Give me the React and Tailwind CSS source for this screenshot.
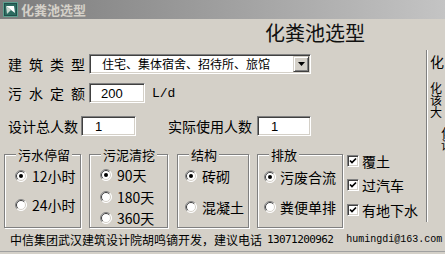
const sunken =
  "border border-t-[#808080] border-l-[#808080] border-b-white border-r-white shadow-[inset_1px_1px_0_#404040,inset_-1px_-1px_0_#d4d0c8] bg-white";
const raised =
  "border border-t-[#d4d0c8] border-l-[#d4d0c8] border-b-[#404040] border-r-[#404040] shadow-[inset_1px_1px_0_#fff,inset_-1px_-1px_0_#808080] bg-[#d4d0c8]";

function AppIcon() {
  return (
    <svg width="15" height="15" viewBox="0 0 15 15" className="shrink-0">
      <rect x="0.5" y="0.5" width="14" height="14" fill="#1f4f4a" stroke="#5f9f8f" />
      <rect x="2" y="2" width="11" height="11" fill="#2d6b60" />
      <path d="M3 4 L11 4 L12 11 L8 8 Z" fill="#ffffff" />
      <path d="M3 4 L8 8 L4 12 Z" fill="#c8d8d0" />
    </svg>
  );
}

function Radio({ checked }) {
  return (
    <svg width="12" height="12" viewBox="0 0 12 12" className="shrink-0">
      <circle cx="6" cy="6" r="5.5" fill="#ffffff" />
      <path d="M2.11 9.89 A5.5 5.5 0 0 1 9.89 2.11" fill="none" stroke="#808080" />
      <path d="M9.89 2.11 A5.5 5.5 0 0 1 2.11 9.89" fill="none" stroke="#ffffff" />
      <path d="M2.8 9.2 A4.5 4.5 0 0 1 9.2 2.8" fill="none" stroke="#404040" />
      <path d="M9.2 2.8 A4.5 4.5 0 0 1 2.8 9.2" fill="none" stroke="#d4d0c8" />
      {checked && <circle cx="6" cy="6" r="2" fill="#000000" />}
    </svg>
  );
}

function RadioRow({ checked, label, pl, gap, mt }) {
  return (
    <div className={`flex items-center h-[16px] ${pl} ${gap} ${mt}`}>
      <Radio checked={checked} />
      <span className="text-[14px] leading-[16px] whitespace-nowrap">{label}</span>
    </div>
  );
}

function Check({ label, mt }) {
  return (
    <div className={`flex items-center h-[16px] gap-[3px] ${mt}`}>
      <div className={`w-[12px] h-[12px] ${sunken} flex items-center justify-center`}>
        <svg width="8" height="8" viewBox="0 0 8 8">
          <path d="M1 3.5 L3 5.5 L7 1.5" fill="none" stroke="#000" strokeWidth="1.7" />
        </svg>
      </div>
      <span className="text-[14px] leading-[16px] whitespace-nowrap">{label}</span>
    </div>
  );
}

function Group({ title, w, ml, pt, children }) {
  return (
    <fieldset
      className={`${w} ${ml} h-[80px] shrink-0 border border-[#808080] shadow-[1px_1px_0_#fff,inset_1px_1px_0_#fff] ${pt}`}
    >
      <legend className="ml-[11px] px-[2px] bg-[#d4d0c8] text-[13px] leading-[13px] whitespace-nowrap">
        {title}
      </legend>
      {children}
    </fieldset>
  );
}

export default function App() {
  return (
    <div className="w-[445px] h-[254px] overflow-hidden bg-[#d4d0c8] flex flex-col font-['Noto_Sans_CJK_SC',sans-serif] text-black">
      <div className="h-[19px] shrink-0 flex items-center gap-[3px] pl-[3px] bg-linear-to-r from-[#7c7c7c] to-[#c4c4c4]">
        <AppIcon />
        <span className="text-[13px] leading-[13px] font-bold text-[#d4d0c8]">化粪池选型</span>
      </div>

      <div className="flex h-[209px] shrink-0">
        <div className="w-[426px] shrink-0 flex flex-col">
          <div className="mt-[3px] h-[22px] leading-[22px] text-[20px] pl-[265px] whitespace-nowrap text-[#111]">
            化粪池选型
          </div>

          <div className="mt-[10px] flex items-center pl-[8px] h-[20px]">
            <span className="w-[81px] shrink-0 text-[14px] leading-[14px] tracking-[7px] whitespace-nowrap">
              建筑类型
            </span>
            <div className={`w-[222px] h-[20px] ${sunken} flex items-center justify-between pl-[12px] pr-[1px]`}>
              <span className="text-[12px] leading-[12px] whitespace-nowrap">住宅、集体宿舍、招待所、旅馆</span>
              <div className={`w-[16px] h-[16px] ${raised} flex items-center justify-center`}>
                <svg width="7" height="4" viewBox="0 0 7 4">
                  <path d="M0 0 L7 0 L3.5 4 Z" fill="#000" />
                </svg>
              </div>
            </div>
          </div>

          <div className="mt-[9px] flex items-center pl-[8px] h-[20px]">
            <span className="w-[81px] shrink-0 text-[14px] leading-[14px] tracking-[7px] whitespace-nowrap">
              污水定额
            </span>
            <div className={`w-[56px] h-[20px] ${sunken} flex items-center pl-[11px]`}>
              <span className="text-[13px] leading-[13px] font-['Liberation_Sans',sans-serif]">200</span>
            </div>
            <span className="ml-[7px] text-[13px] leading-[13px] font-['Liberation_Mono',monospace]">L/d</span>
          </div>

          <div className="mt-[13px] flex items-center pl-[8px] h-[20px]">
            <span className="w-[73px] shrink-0 text-[14px] leading-[14px] whitespace-nowrap">设计总人数</span>
            <div className={`w-[55px] h-[20px] ${sunken} flex items-center pl-[13px]`}>
              <span className="text-[13px] leading-[13px] font-['Liberation_Sans',sans-serif]">1</span>
            </div>
            <span className="ml-[32px] w-[89px] shrink-0 text-[14px] leading-[14px] whitespace-nowrap">
              实际使用人数
            </span>
            <div className={`w-[54px] h-[20px] ${sunken} flex items-center pl-[13px]`}>
              <span className="text-[13px] leading-[13px] font-['Liberation_Sans',sans-serif]">1</span>
            </div>
          </div>

          <div className="mt-[12px] flex items-start pl-[4px]">
            <Group title="污水停留" w="w-[77px]" ml="" pt="pt-[7px]">
              <RadioRow checked label="12小时" pl="pl-[10px]" gap="gap-[5px]" mt="" />
              <RadioRow label="24小时" pl="pl-[10px]" gap="gap-[5px]" mt="mt-[13px]" />
            </Group>
            <Group title="污泥清挖" w="w-[79px]" ml="ml-[8px]" pt="pt-[6px]">
              <RadioRow checked label="90天" pl="pl-[10px]" gap="gap-[5px]" mt="" />
              <RadioRow label="180天" pl="pl-[10px]" gap="gap-[5px]" mt="mt-[6px]" />
              <RadioRow label="360天" pl="pl-[10px]" gap="gap-[5px]" mt="mt-[5px]" />
            </Group>
            <Group title="结构" w="w-[72px]" ml="ml-[9px]" pt="pt-[7px]">
              <RadioRow checked label="砖砌" pl="pl-[7px]" gap="gap-[5px]" mt="" />
              <RadioRow label="混凝土" pl="pl-[7px]" gap="gap-[5px]" mt="mt-[15px]" />
            </Group>
            <Group title="排放" w="w-[86px]" ml="ml-[8px]" pt="pt-[8px]">
              <RadioRow checked label="污废合流" pl="pl-[6px]" gap="gap-[4px]" mt="" />
              <RadioRow label="粪便单排" pl="pl-[6px]" gap="gap-[4px]" mt="mt-[14px]" />
            </Group>
            <div className="ml-[4px] flex flex-col">
              <Check label="覆土" mt="mt-[5px]" />
              <Check label="过汽车" mt="mt-[8px]" />
              <Check label="有地下水" mt="mt-[9px]" />
            </div>
          </div>
        </div>

        <div className="mt-[31px] h-[172px] w-[19px] shrink-0 border-l border-[#808080] shadow-[inset_1px_0_0_#fff] overflow-hidden pl-[3px] flex flex-col whitespace-nowrap">
          <div className="mt-[4px] text-[14px] leading-[14px]">化</div>
          <div className="mt-[14px] text-[12px] leading-[12px]">化</div>
          <div className="text-[12px] leading-[12px]">该</div>
          <div className="text-[12px] leading-[12px]">大</div>
          <div className="mt-[9px] text-[12px] leading-[12px] pl-[11px]">化</div>
          <div className="text-[12px] leading-[12px] pl-[11px]">设</div>
        </div>
      </div>

      <div className="h-[23px] shrink-0 flex items-center pl-[10px] whitespace-nowrap">
        <span className="text-[12px] leading-[12px]">中信集团武汉建筑设计院胡鸣镝开发，建议电话</span>
        <span className="ml-[5px] text-[11px] leading-[11px] font-['DejaVu_Sans_Mono',monospace] tracking-[-0.6px]">
          13071200962
        </span>
        <span className="ml-[13px] text-[10px] leading-[10px] font-['Liberation_Mono',monospace]">
          humingdi@163.com
        </span>
      </div>
      <div className="h-[1px] shrink-0 bg-[#a0a0a0]" />
    </div>
  );
}
